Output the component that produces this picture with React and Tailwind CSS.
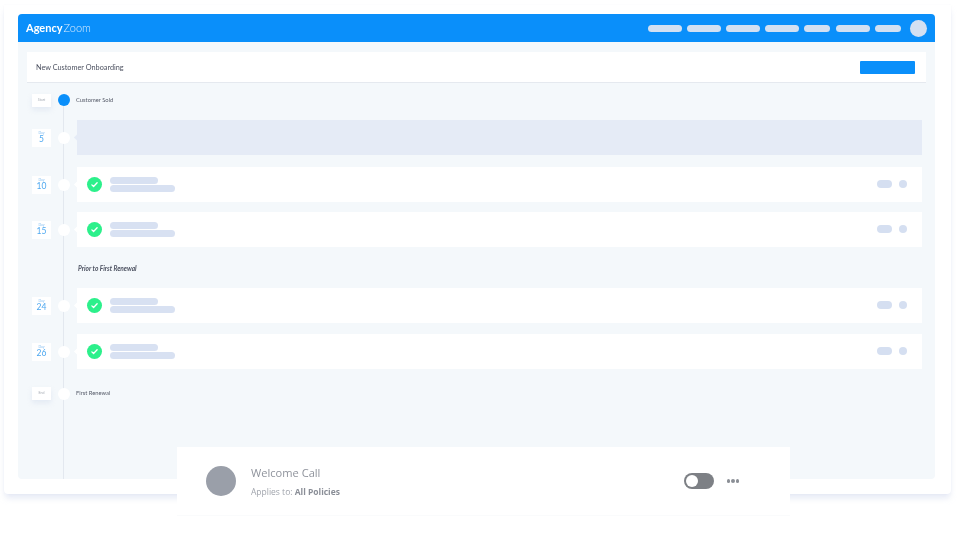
import React from 'react';

const navPills = ['w-[34px]', 'w-[34px]', 'w-[34px]', 'w-[34px]', 'w-[26px]', 'w-[34px]', 'w-[26px]'];

function DateBadge({ label, day }) {
  return (
    <div className="w-[19px] h-[18px] bg-white flex flex-col items-center justify-center shrink-0">
      <span className="text-[3.5px] leading-[4px] text-[#8cc2f2]">{label}</span>
      <span className="text-[8.5px] leading-[9px] text-[#4ea8f0]">{day}</span>
    </div>
  );
}

function EndBadge({ label }) {
  return (
    <div className="w-[19px] h-[13px] bg-white shadow-[0_3px_5px_rgba(180,195,225,0.25)] flex items-center justify-center shrink-0">
      <span className="text-[3.5px] text-[#a5abb4]">{label}</span>
    </div>
  );
}

function Node({ blue }) {
  return <div className={`relative z-10 w-[12px] h-[12px] rounded-full shrink-0 ml-[7px] mr-[6px] ${blue ? 'bg-[#0a8ffa] -mt-[1px]' : 'bg-white'}`}></div>;
}

function Notch({ tint }) {
  return <div className={`w-[5px] h-[5px] rotate-45 -mr-[3px] -ml-[1px] shrink-0 ${tint ? 'bg-[#e5ebf6]' : 'bg-white'}`}></div>;
}

function TaskRow({ day, className }) {
  return (
    <div className={`flex items-center h-[35px] ${className}`}>
      <DateBadge label="Day" day={day} />
      <Node />
      <Notch />
      <div className="w-[845px] h-[35px] bg-white flex items-center pl-[10px] pr-[15px]">
        <div className="w-[15px] h-[15px] rounded-full bg-[#2cf08b] flex items-center justify-center">
          <svg width="9" height="9" viewBox="0 0 24 24" fill="none" stroke="#ffffff" strokeWidth="3.5" strokeLinecap="round" strokeLinejoin="round">
            <path d="M5 13l4.5 4.5L19 7.5" />
          </svg>
        </div>
        <div className="ml-[8px] flex flex-col gap-[1px]">
          <div className="w-[48px] h-[7px] rounded-full bg-[#d8e1f2]"></div>
          <div className="w-[65px] h-[7px] rounded-full bg-[#d8e1f2]"></div>
        </div>
        <div className="ml-auto flex items-center gap-[7px] -mt-[1px]">
          <div className="w-[15px] h-[8px] rounded-full bg-[#d5dff1]"></div>
          <div className="w-[8px] h-[8px] rounded-full bg-[#d5dff1]"></div>
        </div>
      </div>
    </div>
  );
}

export default function App() {
  return (
    <div className="relative w-[960px] h-[537px] overflow-hidden bg-white pt-[5px] pl-[4px] font-['Lato',sans-serif] blur-[0.6px]">
      {/* Outer frame */}
      <div className="w-[947px] h-[489px] bg-white rounded-b-[4px] pt-[9px] pl-[14px] shadow-[0_5px_6px_-1px_rgba(190,200,230,0.4),0_0_1px_rgba(235,235,245,0.5)]">
        <div className="relative w-[917px] h-[465px] bg-[#f4f8fb] rounded-[4px] overflow-hidden">
          {/* Header */}
          <div className="h-[28px] bg-[#0a8ffa] flex items-center pl-[8px] pr-[8px]">
            <div className="text-[11px] text-white">
              <span className="font-bold">Agency</span>
              <span className="font-light ml-[1px] text-[#d6eafd]">Zoom</span>
            </div>
            <div className="ml-auto flex items-center gap-[5.2px]">
              {navPills.map((w, i) => (
                <div key={i} className={`${w} h-[7px] rounded-full bg-[#d3e0f2]`}></div>
              ))}
              <div className="ml-[4px] w-[17px] h-[17px] rounded-full bg-[#d3e0f2]"></div>
            </div>
          </div>

          {/* Title bar */}
          <div className="mt-[10px] ml-[9px] w-[899px] h-[31px] bg-white border-b border-[#e5e9ef] flex items-center pl-[9px] pr-[11px]">
            <span className="text-[7.3px] text-[#4c5160] pt-[2px]">New Customer Onboarding</span>
            <div className="ml-auto w-[55px] h-[13px] rounded-[1px] bg-[#0a8ffa]"></div>
          </div>

          {/* Timeline line */}
          <div className="absolute left-[45px] top-[91px] bottom-0 w-px bg-[#e3e8ef]"></div>

          {/* Timeline */}
          <div className="relative pl-[14px] pt-[11px]">
            <div className="flex items-center h-[13px]">
              <EndBadge label="Start" />
              <Node blue />
              <span className="text-[5.8px] text-[#555a68]">Customer Sold</span>
            </div>

            <div className="flex items-center h-[35px] mt-[13px]">
              <DateBadge label="Day" day="5" />
              <Node />
              <Notch tint />
              <div className="w-[845px] h-[35px] bg-[#e5ebf6]"></div>
            </div>

            <TaskRow day="10" className="mt-[12px]" />
            <TaskRow day="15" className="mt-[10px]" />

            <div className="mt-[16px] h-[10px] pl-[46px] pt-[1px] flex items-center">
              <span className="text-[6.5px] italic font-bold text-[#4c5160]">Prior to First Renewal</span>
            </div>

            <TaskRow day="24" className="mt-[15px]" />
            <TaskRow day="26" className="mt-[11px]" />

            <div className="flex items-center h-[13px] mt-[18px]">
              <EndBadge label="End" />
              <Node />
              <span className="text-[5.8px] text-[#555a68]">First Renewal</span>
            </div>
          </div>
        </div>
      </div>

      {/* Floating card */}
      <div className="absolute left-[177px] top-[447px] w-[613px] h-[69px] bg-white border-b border-[#fafbfc] flex items-center pl-[29px] pr-[51px] pb-[8px]">
        <div className="w-[30px] h-[30px] rounded-full bg-[#9a9fa9] mt-[8px]"></div>
        <div className="ml-[15px] mt-[9px]">
          <div className="text-[11.1px] leading-[16px] text-[#8f939c] font-['Open_Sans',sans-serif]">Welcome Call</div>
          <div className="mt-[5px] text-[8.5px] leading-[12px] text-[#a0a4ac] font-['Open_Sans',sans-serif]">
            Applies to: <span className="font-bold text-[#8a8e97]">All Policies</span>
          </div>
        </div>
        <div className="ml-auto flex items-center gap-[13px] mt-[8px]">
          <div className="w-[30px] h-[16px] rounded-full bg-[#7d8085] flex items-center pl-[2px]">
            <div className="w-[12px] h-[12px] rounded-full bg-white"></div>
          </div>
          <div className="flex gap-[1px]">
            <div className="w-[3.5px] h-[3.5px] rounded-full bg-[#8b8f96]"></div>
            <div className="w-[3.5px] h-[3.5px] rounded-full bg-[#8b8f96]"></div>
            <div className="w-[3.5px] h-[3.5px] rounded-full bg-[#8b8f96]"></div>
          </div>
        </div>
      </div>
    </div>
  );
}
